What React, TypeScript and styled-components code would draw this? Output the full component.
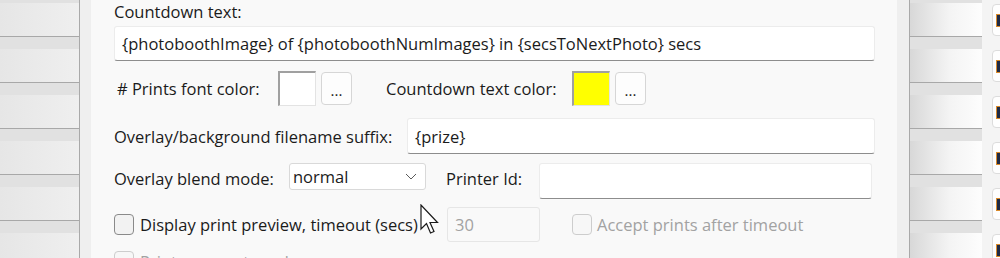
import React from "react";
import styled, { createGlobalStyle } from "styled-components";

const Global = createGlobalStyle`
  html, body { margin: 0; padding: 0; }
  body {
    width: 1000px; height: 258px; overflow: hidden;
    background: #f3f3f3;
    font-family: "Open Sans", "Noto Sans", sans-serif;
    font-size: 16.5px;
    color: #1b1b1b;
  }
`;

const Page = styled.div`
  display: flex;
  width: 1000px;
  height: 258px;
  overflow: hidden;
`;

const Strip = styled.div<{ $side: "left" | "right" }>`
  display: flex;
  flex-direction: column;
  width: ${(p) => (p.$side === "left" ? "79px" : "90px")};
  flex: none;
  ${(p) => (p.$side === "left" ? "border-right: 1px solid #a9a9a9;" : "border-left: 1px solid #a9a9a9;")}
  margin-top: -9px;
  background: #f4f4f4;
`;

const BgRow = styled.div`
  display: flex;
  height: 46px;
  flex: none;
`;

const Band = styled.div`
  height: 12px;
`;

const BgCell = styled.div<{ $side: "left" | "right" }>`
  display: flex;
  flex-direction: column;
  width: ${(p) => (p.$side === "left" ? "79px" : "72px")};
  flex: none;
  background: #e1e1e1;
`;

const BgBar = styled.div<{ $side: "left" | "right" }>`
  height: 33px;
  border-bottom: 1px solid #a8a8a8;
  background: ${(p) =>
    p.$side === "left"
      ? "linear-gradient(to right, #e6e6e6, #efefef)"
      : "linear-gradient(to right, #d8d8d8, #f4f4f4 55%, #fdfdfd)"};
`;

const CardCol = styled.div`
  display: flex;
  flex-direction: column;
  padding: 13px 0 0 10px;
`;

const Card = styled.div`
  width: 20px;
  height: 32px;
  border: 1px solid #dcdcdc;
  border-radius: 4px;
  background: #fefefe;
  display: flex;
  align-items: center;
  padding-left: 3px;
  box-sizing: border-box;
`;

const CardIcon = styled.div`
  width: 9px;
  height: 13px;
  background: #1f2a44;
  border: 1px solid #d98a2b;
  box-sizing: border-box;
`;

const Shadow = styled.div<{ $w: number }>`
  width: ${(p) => p.$w}px;
  flex: none;
  background: #efefef;
`;

const Dialog = styled.div`
  position: relative;
  width: 806px;
  flex: none;
  box-sizing: border-box;
  background: #f9f9f9;
  padding: 0 22px 0 23px;
  display: flex;
  flex-direction: column;
`;

const LabelLine = styled.div`
  height: 23px;
  display: flex;
  align-items: center;
  white-space: nowrap;
`;

const Row = styled.div<{ $top: number; $h: number; $align?: string }>`
  display: flex;
  align-items: ${(p) => p.$align || "center"};
  margin-top: ${(p) => p.$top}px;
  height: ${(p) => p.$h}px;
  flex: none;
`;

const Label = styled.div<{ $w?: number; $ml?: number; $lh?: number; $disabled?: boolean }>`
  white-space: nowrap;
  ${(p) => (p.$w ? `width: ${p.$w}px; flex: none;` : "")}
  margin-left: ${(p) => p.$ml || 0}px;
  ${(p) => (p.$lh ? `line-height: ${p.$lh}px;` : "")}
  color: ${(p) => (p.$disabled ? "#a2a2a2" : "#1b1b1b")};
`;

const TextBox = styled.div<{ $w?: number; $h?: number; $mt?: number; $grow?: boolean; $disabled?: boolean }>`
  box-sizing: border-box;
  height: ${(p) => p.$h || 35}px;
  ${(p) => (p.$w ? `width: ${p.$w}px; flex: none;` : p.$grow ? "flex: 1 1 0;" : "flex: none;")}
  margin-top: ${(p) => p.$mt || 0}px;
  display: flex;
  align-items: center;
  padding-left: 7px;
  white-space: nowrap;
  overflow: hidden;
  border-radius: 3px;
  border: 1px solid ${(p) => (p.$disabled ? "#e6e6e6" : "#ececec")};
  border-bottom: 1px solid ${(p) => (p.$disabled ? "#e6e6e6" : "#8d8d8d")};
  background: ${(p) => (p.$disabled ? "#f9f9f9" : "#ffffff")};
  color: ${(p) => (p.$disabled ? "#a2a2a2" : "#1b1b1b")};
`;

const Swatch = styled.div<{ $color: string }>`
  box-sizing: border-box;
  width: 38px;
  height: 35px;
  flex: none;
  background: ${(p) => p.$color};
  border-top: 2px solid #a0a0a0;
  border-left: 2px solid #a0a0a0;
  border-right: 1px solid #e3e3e3;
  border-bottom: 1px solid #e3e3e3;
`;

const DotsButton = styled.div`
  box-sizing: border-box;
  width: 31px;
  height: 33px;
  flex: none;
  margin-left: 5px;
  border: 1px solid #d6d6d6;
  border-radius: 4px;
  background: #fdfdfd;
  display: flex;
  align-items: center;
  justify-content: center;
  font-size: 15px;
  padding-top: 2px;
`;

const Select = styled.div`
  box-sizing: border-box;
  width: 137px;
  height: 27px;
  flex: none;
  border: 1px solid #d9d9d9;
  border-radius: 3px;
  background: #ffffff;
  display: flex;
  align-items: center;
  justify-content: space-between;
  padding: 0 8px 0 3px;
`;

const CheckBox = styled.div<{ $disabled?: boolean }>`
  box-sizing: border-box;
  width: 20px;
  height: 21px;
  flex: none;
  border: 1px solid ${(p) => (p.$disabled ? "#cdcdcd" : "#8a8a8a")};
  border-radius: 4px;
  background: ${(p) => (p.$disabled ? "#f7f7f7" : "#f2f2f2")};
`;

const CheckGroup = styled.div<{ $w?: number; $ml?: number; $gap?: number }>`
  display: flex;
  align-items: center;
  gap: ${(p) => p.$gap ?? 6}px;
  ${(p) => (p.$w ? `width: ${p.$w}px; flex: none;` : "")}
  margin-left: ${(p) => p.$ml || 0}px;
`;

const Cursor = styled.svg`
  position: absolute;
  left: 329px;
  top: 204px;
`;

const rows = [0, 1, 2, 3, 4, 5, 6];

function Background({ side }: { side: "left" | "right" }) {
  return (
    <Strip $side={side}>
      {rows.map((i) => (
        <BgRow key={i}>
          <BgCell $side={side}>
            <Band />
            <BgBar $side={side} />
          </BgCell>
          {side === "right" && (
            <CardCol>
              <Card>
                <CardIcon />
              </Card>
            </CardCol>
          )}
        </BgRow>
      ))}
    </Strip>
  );
}

export default function App() {
  return (
    <>
      <Global />
      <Page>
        <Background side="left" />
        <Shadow $w={11} />
        <Dialog>
          <LabelLine>Countdown text:</LabelLine>
          <TextBox $mt={3}>
            {"{photoboothImage} of {photoboothNumImages} in {secsToNextPhoto} secs"}
          </TextBox>
          <Row $top={10} $h={35}>
            <Label $w={161} $ml={3}># Prints font color:</Label>
            <Swatch $color="#ffffff" />
            <DotsButton>...</DotsButton>
            <Label $w={186} $ml={34}>Countdown text color:</Label>
            <Swatch $color="#ffff00" />
            <DotsButton>...</DotsButton>
          </Row>
          <Row $top={12} $h={36}>
            <Label $w={293}>Overlay/background filename suffix:</Label>
            <TextBox $h={36} $grow>{"{prize}"}</TextBox>
          </Row>
          <Row $top={9} $h={36} $align="flex-start">
            <Label $w={175} $lh={31}>Overlay blend mode:</Label>
            <Select>
              <span>normal</span>
              <svg width="12" height="7" viewBox="0 0 12 7">
                <path d="M1 1 L6 6 L11 1" fill="none" stroke="#5a5a5a" strokeWidth="1" />
              </svg>
            </Select>
            <Label $w={93} $ml={20} $lh={31}>Printer Id:</Label>
            <TextBox $w={333} $h={36} />
          </Row>
          <Row $top={8} $h={35}>
            <CheckGroup $w={333}>
              <CheckBox />
              <Label>Display print preview, timeout (secs)</Label>
            </CheckGroup>
            <TextBox $w={93} $disabled>
              30
            </TextBox>
            <CheckGroup $ml={32} $gap={5}>
              <CheckBox $disabled />
              <Label $disabled>Accept prints after timeout</Label>
            </CheckGroup>
          </Row>
          <Row $top={8} $h={21} $align="flex-start">
            <CheckGroup>
              <CheckBox $disabled />
              <Label $disabled>Print payment mode</Label>
            </CheckGroup>
          </Row>
          <Cursor width="22" height="32" viewBox="0 0 22 32">
            <path
              d="M1 1 L1 25 L6.5 19.5 L10.5 29 L14 27.5 L10 18.5 L17.5 18.5 Z"
              fill="#ffffff"
              stroke="#1a1a1a"
              strokeWidth="1.2"
              strokeLinejoin="miter"
            />
          </Cursor>
        </Dialog>
        <Shadow $w={12} />
        <Background side="right" />
      </Page>
    </>
  );
}
